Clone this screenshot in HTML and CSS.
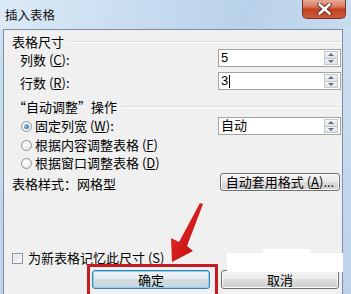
FILE: index.html
```html
<!DOCTYPE html>
<html lang="zh-CN">
<head>
    <meta charset="UTF-8">
    <meta name="viewport" content="width=device-width, initial-scale=1.0">
    <title>插入表格</title>
    <link rel="stylesheet" href="styles.css">
</head>
<body>
    <div class="window">
        <!-- Title bar -->
        <div class="titlebar">
            <span class="title">插入表格</span>
            <div class="close">
                <svg width="15" height="12" viewBox="0 0 15 12">
                    <path d="M2.5 1.5 L12.5 10.5 M12.5 1.5 L2.5 10.5" stroke="#5a2a20" stroke-width="4.4" stroke-linecap="round"/>
                    <path d="M2.5 1.5 L12.5 10.5 M12.5 1.5 L2.5 10.5" stroke="#ffffff" stroke-width="2.6" stroke-linecap="round"/>
                </svg>
            </div>
        </div>

        <div class="client">
            <!-- Table size -->
            <div class="group-head head-size">
                <span>表格尺寸</span>
                <i class="rule"></i>
            </div>
            <div class="field">
                <label class="indent">列数 (<u>C</u>):</label>
                <div class="spin"><span class="value">5</span><div class="spin-btns"><b class="up"></b><b class="down"></b></div></div>
            </div>
            <div class="field field-gap">
                <label class="indent">行数 (<u>R</u>):</label>
                <div class="spin"><span class="value">3<i class="caret"></i></span><div class="spin-btns"><b class="up"></b><b class="down"></b></div></div>
            </div>

            <!-- Autofit -->
            <div class="group-head head-fit">
                <span><span class="quote">“</span>自动调整<span class="quote">”</span>操作</span>
                <i class="rule"></i>
            </div>
            <div class="field radio-first">
                <label class="option"><i class="radio checked"></i>固定列宽 (<u>W</u>):</label>
                <div class="spin"><span class="value">自动</span><div class="spin-btns"><b class="up"></b><b class="down"></b></div></div>
            </div>
            <div class="field radio-second">
                <label class="option"><i class="radio"></i>根据内容调整表格 (<u>F</u>)</label>
            </div>
            <div class="field">
                <label class="option"><i class="radio"></i>根据窗口调整表格 (<u>D</u>)</label>
            </div>

            <!-- Table style -->
            <div class="field style-row">
                <span class="style-label">表格样式：网格型</span>
                <button class="btn btn-wide">自动套用格式 (<u>A</u>)...</button>
            </div>

            <div class="check-row">
                <i class="checkbox"></i>为新表格记忆此尺寸 (<u>S</u>)
            </div>

            <div class="actions">
                <button class="btn btn-default">确定</button>
                <button class="btn">取消</button>
            </div>
        </div>

        <!-- Annotations over the screenshot -->
        <div class="highlight"></div>
        <svg class="arrow" width="45" height="66" viewBox="0 0 45 66">
            <defs>
                <linearGradient id="arrow-fill" x1="0" y1="0" x2="1" y2="1">
                    <stop offset="0" stop-color="#f03030"/>
                    <stop offset="1" stop-color="#b80808"/>
                </linearGradient>
            </defs>
            <polygon points="35,3 38,4 22,46 28,51 7,62 6,38 14,42" fill="url(#arrow-fill)"/>
        </svg>
        <div class="blot"></div>
        <div class="blot blot-top"></div>
    </div>
</body>
</html>
```

FILE: styles.css
```css
body {
    margin: 0;
    overflow: hidden;
    font-family: "Noto Sans CJK SC", sans-serif;
    font-size: 13px;
    color: #000;
}

.window {
    position: relative;
    width: 351px;
    height: 294px;
    overflow: hidden;
    background: linear-gradient(to bottom, #cfe0f1, #bcd3ea);
}

.titlebar {
    position: relative;
    height: 29px;
    display: flex;
    align-items: center;
    padding-left: 5px;
    background: linear-gradient(100deg, #dce9f6 0%, #c8dcf0 40%, #b9d1ea 70%, #c9dcef 100%);
}

.title {
    font-size: 12.5px;
    line-height: 14px;
    color: #111;
}

.close {
    position: absolute;
    left: 302px;
    top: -1px;
    width: 42px;
    height: 19px;
    border: 1px solid #7a3226;
    border-top: none;
    border-radius: 0 0 5px 5px;
    background: linear-gradient(to bottom, #eab1a1 0%, #d97b62 40%, #c3401f 55%, #cf5a3c 100%);
    display: flex;
    align-items: center;
    justify-content: center;
}

.client {
    margin: 0 8px 0 3px;
    height: 300px;
    border: 1px solid #7d8fa3;
    border-bottom: none;
    background-color: #f0f0f0;
    padding: 0 1px 0 8px;
    box-sizing: border-box;
}

.group-head {
    height: 14px;
    display: flex;
    align-items: center;
    gap: 4px;
    line-height: 14px;
}

.head-size {
    margin-top: 5px;
}

.head-fit {
    margin-top: 10px;
    padding-left: 1px;
}

.quote {
    display: inline-block;
    width: 13px;
    text-align: center;
}

.rule {
    flex: 1;
    height: 0;
    border-top: 1px solid #d5dfe5;
    border-bottom: 1px solid #fff;
}

.field {
    height: 18px;
    display: flex;
    align-items: center;
    justify-content: space-between;
    line-height: 14px;
}

.field-gap {
    margin-top: 5px;
}

.indent {
    padding-left: 8px;
    padding-top: 4px;
}

.spin {
    width: 123px;
    height: 18px;
    box-sizing: border-box;
    border: 1px solid #a3a3a3;
    background-color: #fff;
    display: flex;
    align-items: center;
    justify-content: space-between;
    padding: 0 2px 0 2px;
}

.value {
    font-family: "Liberation Sans", "Noto Sans CJK SC", sans-serif;
    font-size: 13px;
    line-height: 14px;
    display: flex;
    align-items: center;
}

.caret {
    display: inline-block;
    width: 1px;
    height: 13px;
    margin-left: 1px;
    background-color: #000;
}

.spin-btns {
    width: 14px;
    height: 14px;
    display: flex;
    flex-direction: column;
}

.spin-btns b {
    flex: 1;
    position: relative;
    border: 1px solid #c4c8cc;
    background: linear-gradient(to bottom, #f6f6f6, #dfe2e6);
}

.spin-btns .down {
    border-top: none;
}

.spin-btns b::after {
    content: "";
    position: absolute;
    left: 3px;
    top: 1px;
    border-left: 3px solid transparent;
    border-right: 3px solid transparent;
}

.spin-btns .up::after {
    border-bottom: 3px solid #5d6f86;
}

.spin-btns .down::after {
    top: 1px;
    border-top: 3px solid #5d6f86;
}

.radio-first {
    margin-top: 3px;
}

.radio-second {
    margin-top: 1px;
}

.option {
    display: flex;
    align-items: center;
    padding-left: 9px;
}

.radio {
    width: 11px;
    height: 11px;
    box-sizing: border-box;
    border-radius: 50%;
    border: 1px solid #8f9498;
    background: radial-gradient(circle at 40% 35%, #ffffff, #dfe2e5);
    margin-right: 3px;
    display: flex;
    align-items: center;
    justify-content: center;
}

.radio.checked::after {
    content: "";
    width: 5px;
    height: 5px;
    border-radius: 50%;
    background: radial-gradient(circle at 35% 35%, #8fc3ef, #1c5a92);
}

.style-row {
    margin-top: 1px;
}

.style-label {
    padding-top: 3px;
}

.btn {
    font-family: "Noto Sans CJK SC", sans-serif;
    font-size: 13px;
    line-height: 14px;
    color: #000;
    height: 18px;
    padding: 0;
    border: 1px solid #707070;
    border-radius: 3px;
    background: linear-gradient(to bottom, #f2f2f2 0%, #ebebeb 50%, #dddddd 50%, #cfcfcf 100%);
    box-shadow: inset 0 0 0 1px #fcfcfc;
}

.btn-wide {
    width: 120px;
    margin-right: 1px;
}

.check-row {
    margin-top: 59px;
    height: 16px;
    display: flex;
    align-items: center;
    line-height: 14px;
}

.checkbox {
    width: 11px;
    height: 11px;
    box-sizing: border-box;
    border: 1px solid #8f9498;
    background: linear-gradient(135deg, #dcdfe2, #fbfbfb);
    box-shadow: inset 0 0 0 1px #f4f4f4;
    margin-right: 5px;
}

.actions {
    margin-top: 4px;
    display: flex;
    justify-content: flex-end;
    gap: 11px;
    padding-right: 2px;
}

.actions .btn {
    width: 118px;
    height: 19px;
}

.btn-default {
    border-color: #3c7fb1;
    box-shadow: inset 0 0 0 1px #7fd6f5;
    background: linear-gradient(to bottom, #eef3f6 0%, #e4ebef 50%, #d4dde3 50%, #c9d3da 100%);
}

/* red annotation box and arrow */
.highlight {
    position: absolute;
    left: 87px;
    top: 264px;
    width: 131px;
    height: 40px;
    box-sizing: border-box;
    border: 3px solid #c41c22;
}

.arrow {
    position: absolute;
    left: 165px;
    top: 200px;
}

/* white patch left by watermark removal */
.blot {
    position: absolute;
    left: 227px;
    top: 253px;
    width: 116px;
    height: 19px;
    background-color: #fff;
}

.blot-top {
    left: 263px;
    top: 249px;
    width: 47px;
    height: 6px;
}
```
